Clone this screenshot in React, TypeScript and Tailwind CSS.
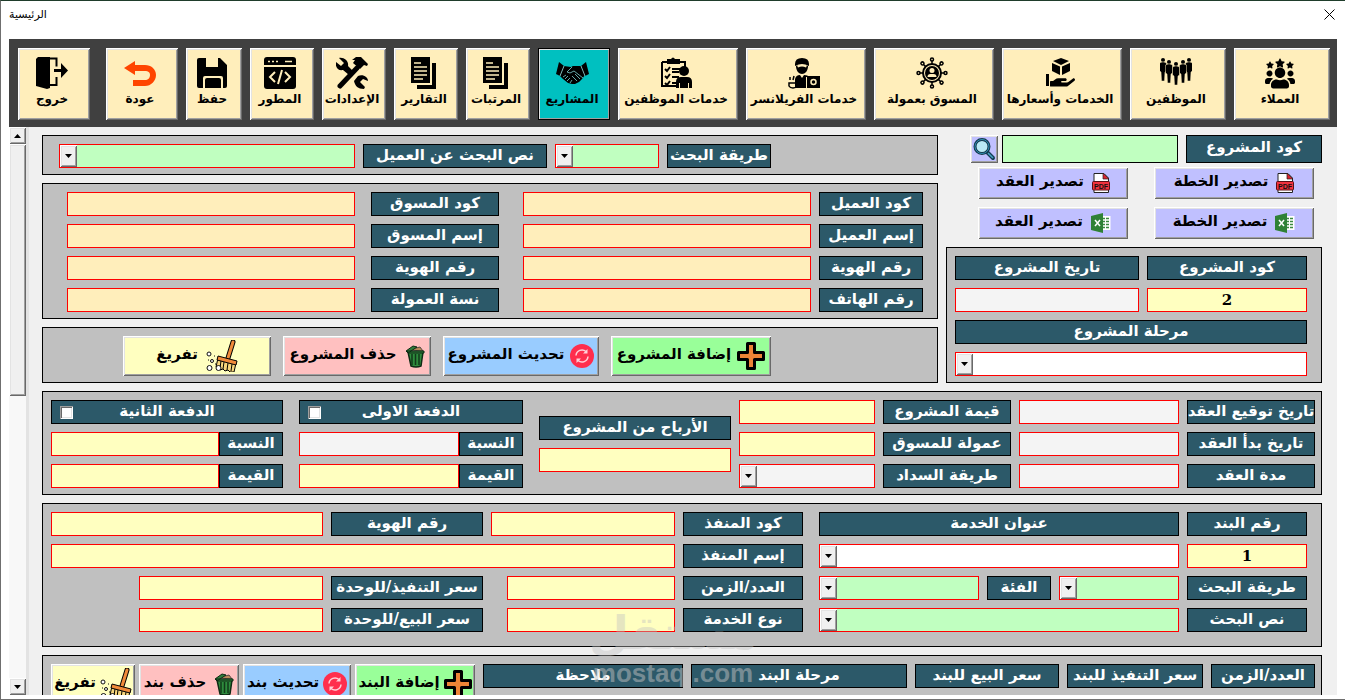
import { useState } from "react";
import type { ReactNode } from "react";
import { FaHandHolding, FaStar, FaUsers } from "react-icons/fa";

const bevel =
  "shadow-[inset_1px_1px_0_#fff,inset_-1px_-1px_0_#696969,inset_2px_2px_0_#e3e3e3,inset_-2px_-2px_0_#a0a0a0]";

/* ---------- toolbar icons ---------- */

const ExitIcon = () => (
  <svg viewBox="0 0 32 32" className="size-8">
    <path d="M0 2 2 0h12v31l-3 1-11-3z" fill="#000" />
    <path d="M14 1.5h6.500v8M14 28h6.500v-8" fill="none" stroke="#000" strokeWidth="2" />
    <path d="M18 12h7V6l7 7.500-7 7.500v-6h-7z" fill="#000" />
  </svg>
);

const BackIcon = () => (
  <svg viewBox="0 0 32 32" className="size-8">
    <path d="M0 11 11 4v4h10c6 0 11 4 11 10s-5 11-11 11H9v-6h12c3 0 5-2 5-5s-2-4-5-4H11v4z" fill="#ff4500" />
  </svg>
);

const SaveIcon = () => (
  <svg viewBox="0 0 32 32" className="size-8">
    <path d="M1 3q0-2 2-2h7v9h12V1h2l7 7v21q0 2-2 2h-2V21q0-2-2-2H9q-2 0-2 2v10H3q-2 0-2-2zM12 1h3v6h5V1h-8zM9 31v-8q0-2 2-2h12q2 0 2 2v8z" fill="#000" />
    <path d="M15 1h5v7h-5z" fill="#ffeebb" />
  </svg>
);

const CodeIcon = () => (
  <svg viewBox="0 0 32 32" className="size-8">
    <rect width="32" height="32" rx="3" fill="#000" />
    <path d="M0 9h32" stroke="#ffeebb" strokeWidth="2" />
    <path d="M4 4.500h2M8 4.500h2M12 4.500h2M21 4.500h7" stroke="#ffeebb" strokeWidth="1.500" />
    <path d="m11 15-5 5 5 5M21 15l5 5-5 5M18 13l-4 14" fill="none" stroke="#ffeebb" strokeWidth="2" />
  </svg>
);

const ToolsIcon = () => (
  <svg viewBox="0 0 32 32" className="size-8">
    <path d="M4 29 21 11" stroke="#000" strokeWidth="5" strokeLinecap="round" />
    <path d="m16 3 4-3h5l7 7-1 2-3-1-4 4-7-6 2-3z" fill="#000" />
    <path d="m3 1 5 5-3 3-5-4c-1 5 2 9 7 8l6 5 4-4-5-5c1-5-4-9-9-8zM18 24l4-5c5-2 10 1 10 5l-5-2-3 3 5 5-1 2c-6 0-9-3-10-8z" fill="#000" />
  </svg>
);

const DocumentsIcon = () => (
  <svg viewBox="0 0 26 32" className="h-8 w-[26px]">
    <path d="M0 0h19v26H0z" fill="#000" />
    <path d="M21 6h4v26H6v-4h15z" fill="#000" />
    <path d="M3 6h7M3 10h13M3 14h13M3 18h13M3 22h9" stroke="#ffeebb" strokeWidth="1.500" />
  </svg>
);

const HandshakeIcon = () => (
  <svg viewBox="0 0 33 32" className="h-8 w-[33px]">
    <path d="m3 5 5 4-4 10-4-2zM30 5l-5 4 4 10 4-2z" fill="#000" />
    <path d="m8 9 7 1 2-1 8 0 4 9-3 4-3 3-4 2-3 0-4-1-5-4-3-3z" fill="#000" />
    <path d="m8 9-4 10M25 9l4 10" stroke="#9fdede" strokeWidth=".8" />
    <path d="m16 10-5 5 3 1 4-2 9 7M19 17l5 5M16 19l5 5M7 20l3-2M9 22l3-3M11 24l3-3M14 26l2-3" fill="none" stroke="#7fd0d0" strokeWidth=".8" />
  </svg>
);

const ChecklistIcon = () => (
  <svg viewBox="0 0 32 32" className="size-8">
    <path d="M2 5h23v7M16 29H2V5" fill="none" stroke="#000" strokeWidth="2" />
    <path d="M7 2h4q2-3 4 0h5v5H7z" fill="#000" />
    <path d="m5 12 2 2 3-4M5 19l2 2 3-4M5 26l2 2 3-4M12 12h8M12 15h7M12 20h7M12 26h4" fill="none" stroke="#000" strokeWidth="2" />
    <circle cx="24" cy="14" r="5" fill="#000" />
    <path d="M16 31v-6q0-5 5-5h6q5 0 5 5v6z" fill="#000" />
    <path d="M19.500 26v5M28.500 26v5" stroke="#ffeebb" />
  </svg>
);

const FreelancerIcon = () => (
  <svg viewBox="0 0 32 32" className="size-8">
    <path d="M7 7q0-6 7-6t7 6v2q-7-4-14 0z" fill="#000" />
    <path d="M8 9q6-4 12 0c0 5-3 8-6 8s-6-3-6-8z" fill="#000" />
    <path d="M9 8.500q5-3 10 0l-1 2q-4-2-8 0z" fill="#ffeebb" />
    <path d="M7 31V22q1-4 5-4l2 3 2-3q4 0 5 2h-3v11z" fill="#000" />
    <path d="M19 19h13v12H19z" fill="#000" />
    <circle cx="25.500" cy="25" r="2.500" fill="none" stroke="#ffeebb" strokeWidth="1.500" />
    <path d="M1 26h8v3q-1 2-4 2t-4-2zM2 23v-3M5 23l1-4" fill="none" stroke="#000" strokeWidth="1.500" />
  </svg>
);

const spokes = [0, 45, 90, 135, 180, 225, 270, 315];

const NetworkIcon = () => (
  <svg viewBox="0 0 32 32" className="size-8">
    {spokes.map((angle) => (
      <g key={angle} transform={`rotate(${angle} 16 16)`} fill="none" stroke="#000">
        <path d="M16 7V4" strokeWidth="1.500" />
        <circle cx="16" cy="2.500" r="1.500" strokeWidth="1.500" />
      </g>
    ))}
    <circle cx="16" cy="16" r="9" fill="none" stroke="#000" strokeWidth="2" />
    <circle cx="16" cy="16" r="7" fill="#000" />
    <circle cx="16" cy="13.500" r="2.500" fill="#ffeebb" />
    <path d="M11.500 20q0-3 3-3h3q3 0 3 3z" fill="#ffeebb" />
  </svg>
);

const ServicesIcon = () => (
  <svg viewBox="0 0 32 32" className="size-8">
    <path d="m17 1 8 3-8 4-8-4zM8 6l8 3.500V18l-8-4zM26 6l-8 3.500V18l8-4z" fill="#000" />
    <path d="M2 17h3v12H2z" fill="#000" />
    <FaHandHolding x="6" y="6" size={25} />
  </svg>
);

const crew = [
  { x: 3, y: 1 },
  { x: 29, y: 1 },
  { x: 9, y: 3 },
  { x: 23, y: 3 },
  { x: 16, y: 5 },
];

const StaffIcon = () => (
  <svg viewBox="0 0 32 32" className="size-8">
    {crew.map(({ x, y }) => (
      <g key={x} transform={`translate(${x} ${y})`}>
        <circle cy="2" r="2" fill="#000" />
        <path d="m-3.500 5 2.500-1h2l2.500 1v8l-1.500 1-.5 9h-3l-.5-9-1.500-1z" fill="#000" stroke="#ffeebb" strokeWidth=".5" />
      </g>
    ))}
  </svg>
);

const CustomersIcon = () => (
  <svg viewBox="0 0 32 32" className="size-8">
    <FaStar x="11" y="1" size={10} />
    <FaStar x="2" y="4" size={8} />
    <FaStar x="22" y="4" size={8} />
    <FaUsers x="1" y="6" size={30} />
  </svg>
);

/* ---------- form icons ---------- */

const SearchIcon = () => (
  <svg viewBox="0 0 24 24" className="size-6">
    <path d="m15 15 6 6" stroke="#123c55" strokeWidth="4" strokeLinecap="round" />
    <path d="m16 16 5 5" stroke="#4aa3c7" strokeWidth="1.500" />
    <circle cx="10" cy="9.500" r="7" fill="#b9e9f5" stroke="#14384c" strokeWidth="3" />
    <circle cx="10" cy="9.500" r="7" fill="none" stroke="#2f8fb5" strokeWidth="1" />
  </svg>
);

const PdfIcon = () => (
  <svg viewBox="0 0 18 20" className="h-5 w-[18px]">
    <path d="M2 .500h10l4.500 4.500v14.500H2z" fill="#fff" stroke="#222" />
    <path d="M11 0v6h6z" fill="#d9222f" stroke="#222" strokeWidth=".7" />
    <rect x=".5" y="8.500" width="17" height="8.500" rx="1" fill="#f1323e" stroke="#5a1116" />
    <text x="9" y="15.500" textAnchor="middle" fontSize="7" fontWeight="700" fill="#111" fontFamily="Liberation Sans, sans-serif">
      PDF
    </text>
  </svg>
);

const ExcelIcon = () => (
  <svg viewBox="0 0 20 20" className="size-5">
    <path d="M10 3h9.500v14H10z" fill="#fff" />
    <path d="M12 5.500h2M15 5.500h3M12 8.500h2M15 8.500h3M12 11.500h2M15 11.500h3M12 14.500h2M15 14.500h3" stroke="#3b8a3f" strokeWidth="1.500" />
    <path d="m0 3 12-3v20L0 17z" fill="#2f8136" />
    <path d="m4 7 5 6M9 7l-5 6" stroke="#fff" strokeWidth="1.500" />
  </svg>
);

const PlusIcon = () => (
  <svg viewBox="0 0 28 28" className="size-7 shrink-0">
    <path d="M10.500 1.500h7v9h9v7h-9v9h-7v-9h-9v-7h9z" fill="#ed8536" stroke="#000" strokeWidth="3" strokeLinejoin="round" />
  </svg>
);

const RefreshIcon = () => (
  <svg viewBox="0 0 24 24" className="size-6 shrink-0">
    <circle cx="12" cy="12" r="12" fill="#ff2e4d" />
    <path d="M6 11.500a6 6 0 0 1 10-4M18 12.500a6 6 0 0 1-10 4" fill="none" stroke="#ffd0d8" strokeWidth="1.500" />
    <path d="M17.500 5v4.500H13zM6.500 19v-4.500H11z" fill="#ffd0d8" />
  </svg>
);

const TrashIcon = () => (
  <svg viewBox="0 0 20 24" className="h-6 w-5 shrink-0">
    <path d="M3 8h15l-2 14q-5 2-10 0z" fill="#2e8b3d" stroke="#0e2a14" strokeWidth="1.500" />
    <path d="M7 10v11M10.500 10v11M14 10v11" stroke="#123a1a" strokeWidth="1.500" />
    <path d="M5 6q3-4 6-2l4-1 3 4z" fill="#b98a5a" stroke="#333" strokeWidth=".8" />
    <path d="m1 7 7-5 4 1-9 6zM2 7h17v2H3z" fill="#2f7d3b" stroke="#0e2a14" />
  </svg>
);

const BroomIcon = () => (
  <svg viewBox="0 0 32 32" className="size-8 shrink-0">
    <path d="M27 2 22 18" stroke="#000" strokeWidth="5" strokeLinecap="round" />
    <path d="M27 2 22 18" stroke="#f08a3a" strokeWidth="3" strokeLinecap="round" />
    <path d="m12 18-2 9 3 1 1 2 3-1 2 2 3-1 2 2h4l2-9z" fill="#f7d67c" stroke="#000" />
    <path d="m15 21-1 7M18 22l-1 7M22 23l-1 7M26 24l-1 7" stroke="#000" />
    <path d="m12 16 19 5-1 4-19-5z" fill="#f08a3a" stroke="#000" />
    <g fill="#fff" stroke="#111">
      <circle cx="3" cy="14" r="2" />
      <circle cx="6" cy="21" r="1.500" />
      <circle cx="3.500" cy="28" r="2.500" />
      <circle cx="12.500" cy="28" r="2.500" />
    </g>
    <path d="M8 16h1M2 20h1M9 24h1" stroke="#111" />
  </svg>
);

/* ---------- controls ---------- */

const fills = {
  yellow: "bg-[#ffffc0]",
  green: "bg-[#c0ffc0]",
  sand: "bg-[#ffeebb]",
  gray: "bg-[#f4f4f4]",
  white: "bg-white",
};

type Fill = keyof typeof fills;

const Label = ({ htmlFor, className = "", children }: { htmlFor?: string; className?: string; children: ReactNode }) => (
  <label
    htmlFor={htmlFor}
    className={`flex h-6 items-center justify-center border border-black bg-[#2c5969] pb-0.5 text-[15px] font-bold whitespace-nowrap text-white ${className}`}
  >
    {children}
  </label>
);

const Field = ({ id, fill = "yellow", className = "", value }: { id: string; fill?: Fill; className?: string; value?: string }) => (
  <input
    id={id}
    type="text"
    defaultValue={value}
    className={`h-6 min-w-0 border border-[#ff0000] px-1 text-center font-['DejaVu_Serif',serif] text-[15px] font-bold text-black outline-none ${fills[fill]} ${className}`}
  />
);

const Combo = ({ id, fill = "green", className = "" }: { id: string; fill?: Fill; className?: string }) => (
  <div className={`relative h-6 min-w-0 border border-[#ff0000] ${fills[fill]} ${className}`}>
    <select id={id} className="size-full appearance-none bg-transparent pr-1 pl-5 text-sm outline-none">
      <option value=""></option>
    </select>
    <span className={`pointer-events-none absolute inset-y-0 left-0 flex w-[17px] items-center justify-center bg-[#f0f0f0] ${bevel}`}>
      <svg viewBox="0 0 7 4" className="h-1 w-[7px]">
        <path d="M0 0h7L3.500 4z" />
      </svg>
    </span>
  </div>
);

const Panel = ({ className = "", children }: { className?: string; children: ReactNode }) => (
  <section className={`border border-black bg-[#c0c0c0] pt-2 ${className}`}>{children}</section>
);

const Action = ({ className, icon, children }: { className: string; icon: ReactNode; children: ReactNode }) => (
  <button type="button" className={`flex items-center justify-center font-bold whitespace-nowrap text-black ${bevel} ${className}`}>
    {icon}
    <span className="pb-1">{children}</span>
  </button>
);

/* ---------- toolbar ---------- */

const tabs = [
  { title: "العملاء", icon: <CustomersIcon />, width: "flex-[96_1_0px]" },
  { title: "الموظفين", icon: <StaffIcon />, width: "flex-[96_1_0px]" },
  { title: "الخدمات وأسعارها", icon: <ServicesIcon />, width: "flex-[120_1_0px]" },
  { title: "المسوق بعمولة", icon: <NetworkIcon />, width: "flex-[120_1_0px]" },
  { title: "خدمات الفريلانسر", icon: <FreelancerIcon />, width: "flex-[120_1_0px]" },
  { title: "خدمات الموظفين", icon: <ChecklistIcon />, width: "flex-[120_1_0px]" },
  { title: "المشاريع", icon: <HandshakeIcon />, width: "flex-[72_1_0px]" },
  { title: "المرتبات", icon: <DocumentsIcon />, width: "flex-[64_1_0px]" },
  { title: "التقارير", icon: <DocumentsIcon />, width: "flex-[64_1_0px]" },
  { title: "الإعدادات", icon: <ToolsIcon />, width: "flex-[64_1_0px]" },
  { title: "المطور", icon: <CodeIcon />, width: "flex-[64_1_0px]" },
  { title: "حفظ", icon: <SaveIcon />, width: "flex-[56_1_0px]" },
  { title: "عودة", icon: <BackIcon />, width: "flex-[72_1_0px]" },
  { title: "خروج", icon: <ExitIcon />, width: "flex-[72_1_0px] mr-2" },
];

const Toolbar = () => {
  const [active, setActive] = useState("المشاريع");

  return (
    <nav className="flex h-[88px] shrink-0 gap-2 bg-[#404040] pt-[9px] pr-[7px] pl-[9px]">
      {tabs.map(({ title, icon, width }) => (
        <button
          key={title}
          type="button"
          onClick={() => setActive(title)}
          className={`h-[72px] min-w-0 ${width} ${active === title ? "bg-[#00c0c0] outline outline-black -outline-offset-1" : "bg-[#ffeebb]"}`}
        >
          <span className={`flex h-full flex-col items-center justify-center gap-0.5 pr-1 pb-1 text-[12px] leading-4 font-bold whitespace-nowrap ${bevel}`}>
            {icon}
            {title}
          </span>
        </button>
      ))}
    </nav>
  );
};

/* ---------- form sections ---------- */

const ProjectLookup = () => (
  <div className="flex w-[376px] shrink-0 flex-col">
    <div className="flex pl-6">
      <label htmlFor="find-project" className="flex h-7 w-[136px] items-center justify-center border border-black bg-[#2c5969] pb-1 text-[15px] font-bold text-white">
        كود المشروع
      </label>
      <input id="find-project" type="text" className="mr-2 h-7 min-w-0 flex-1 border border-black bg-[#c0ffc0] px-1 text-sm outline-none" />
      <button type="button" aria-label="بحث" className={`mr-1 flex size-7 items-center justify-center bg-[#c0c0ff] ${bevel}`}>
        <SearchIcon />
      </button>
    </div>
    <div className="mt-1 mb-2 grid grid-cols-[160px_150px] gap-x-[26px] gap-y-2 pr-2">
      <Action icon={<PdfIcon />} className="h-8 gap-2 bg-[#c0c0ff] text-[15px]">تصدير الخطة</Action>
      <Action icon={<PdfIcon />} className="h-8 gap-2 bg-[#c0c0ff] text-[15px]">تصدير العقد</Action>
      <Action icon={<ExcelIcon />} className="h-8 gap-2 bg-[#c0c0ff] text-[15px]">تصدير الخطة</Action>
      <Action icon={<ExcelIcon />} className="h-8 gap-2 bg-[#c0c0ff] text-[15px]">تصدير العقد</Action>
    </div>
    <Panel className="grid grid-cols-[160px_1fr] gap-2 pr-3.5 pb-1.5 pl-2">
      <Label htmlFor="project-code">كود المشروع</Label>
      <Label htmlFor="project-date">تاريخ المشروع</Label>
      <Field id="project-code" value="2" />
      <Field id="project-date" fill="gray" />
      <Label htmlFor="project-stage" className="col-span-2">مرحلة المشروع</Label>
      <Combo id="project-stage" fill="white" className="col-span-2" />
    </Panel>
  </div>
);

const people = [
  ["كود العميل", "كود المسوق"],
  ["إسم العميل", "إسم المسوق"],
  ["رقم الهوية", "رقم الهوية"],
  ["رقم الهاتف", "نسة العمولة"],
];

const ClientSection = () => (
  <div className="flex min-w-0 flex-1 flex-col gap-2">
    <Panel className="flex gap-2 pr-[166px] pb-1.5 pl-4">
      <Label htmlFor="client-method" className="w-[104px]">طريقة البحث</Label>
      <Combo id="client-method" className="w-[104px]" />
      <Label htmlFor="client-query" className="w-[184px]">نص البحث عن العميل</Label>
      <Combo id="client-query" className="flex-1" />
    </Panel>
    <Panel className="flex flex-col gap-2 pr-3.5 pb-1.5 pl-6">
      {people.map(([client, marketer], i) => (
        <div key={client} className="flex">
          <Label htmlFor={`client-${i}`} className="w-[104px]">{client}</Label>
          <Field id={`client-${i}`} fill="sand" className="mr-2 flex-1" />
          <Label htmlFor={`marketer-${i}`} className="mr-6 w-32">{marketer}</Label>
          <Field id={`marketer-${i}`} fill="sand" className="mr-4 flex-1" />
        </div>
      ))}
    </Panel>
    <Panel className="flex gap-3 pr-[166px] pb-1.5">
      <Action icon={<PlusIcon />} className="h-10 w-40 gap-1.5 bg-[#99ff99] text-[15px]">إضافة المشروع</Action>
      <Action icon={<RefreshIcon />} className="h-10 w-[156px] gap-1.5 bg-[#99ccff] text-[15px]">تحديث المشروع</Action>
      <Action icon={<TrashIcon />} className="h-10 w-[148px] gap-2 bg-[#ffc0c0] text-[15px]">حذف المشروع</Action>
      <Action icon={<BroomIcon />} className="h-10 w-[148px] gap-2 bg-[#ffffc0] text-[15px]">تفريغ</Action>
    </Panel>
  </div>
);

const Payment = ({ id, title, rateFill, className }: { id: string; title: string; rateFill: Fill; className: string }) => (
  <fieldset className={`flex min-w-0 shrink-0 flex-col gap-2 ${className}`}>
    <div className="grid items-center">
      <Label htmlFor={`${id}-on`} className="col-start-1 row-start-1">{title}</Label>
      <input
        id={`${id}-on`}
        type="checkbox"
        className="col-start-1 row-start-1 ml-[9px] size-[13px] appearance-none justify-self-end bg-white shadow-[inset_1px_1px_0_#a0a0a0,inset_-1px_-1px_0_#fff,inset_2px_2px_0_#696969,inset_-2px_-2px_0_#e3e3e3] checked:bg-black"
      />
    </div>
    <div className="flex">
      <Label htmlFor={`${id}-rate`} className="w-16">النسبة</Label>
      <Field id={`${id}-rate`} fill={rateFill} className="flex-1" />
    </div>
    <div className="flex">
      <Label htmlFor={`${id}-amount`} className="w-16">القيمة</Label>
      <Field id={`${id}-amount`} className="flex-1" />
    </div>
  </fieldset>
);

const ContractSection = () => (
  <Panel className="flex pr-1.5 pb-1.5 pl-2">
    <div className="grid min-w-0 flex-1 grid-cols-[128px_160fr_128px_136fr] gap-2">
      <Label htmlFor="sign-date">تاريخ توقيع العقد</Label>
      <Field id="sign-date" fill="gray" />
      <Label htmlFor="project-value">قيمة المشروع</Label>
      <Field id="project-value" />
      <Label htmlFor="start-date">تاريخ بدأ العقد</Label>
      <Field id="start-date" fill="gray" />
      <Label htmlFor="commission">عمولة للمسوق</Label>
      <Field id="commission" />
      <Label htmlFor="duration">مدة العقد</Label>
      <Field id="duration" fill="gray" />
      <Label htmlFor="pay-method">طريقة السداد</Label>
      <Combo id="pay-method" fill="gray" />
    </div>
    <div className="mr-2 flex w-48 flex-col justify-center gap-2">
      <Label htmlFor="profit">الأرباح من المشروع</Label>
      <Field id="profit" />
    </div>
    <Payment id="first" title="الدفعة الاولى" rateFill="gray" className="mr-4 w-56" />
    <Payment id="second" title="الدفعة الثانية" rateFill="yellow" className="mr-4 w-[232px]" />
  </Panel>
);

const ItemSection = () => (
  <Panel className="flex gap-4 pr-3.5 pb-3.5 pl-2">
    <div className="grid w-[488px] shrink-0 grid-cols-[120px_120px_64px_1fr] gap-2">
      <Label htmlFor="item-no">رقم البند</Label>
      <Label htmlFor="service" className="col-span-3">عنوان الخدمة</Label>
      <Field id="item-no" value="1" />
      <Combo id="service" fill="white" className="col-span-3" />
      <Label htmlFor="item-method">طريقة البحث</Label>
      <Combo id="item-method" />
      <Label htmlFor="category">الفئة</Label>
      <Combo id="category" />
      <Label htmlFor="item-query">نص البحث</Label>
      <Combo id="item-query" className="col-span-3" />
    </div>
    <div className="flex min-w-0 flex-1 flex-col gap-2">
      <div className="flex gap-2">
        <Label htmlFor="worker-code" className="w-[120px]">كود المنفذ</Label>
        <Field id="worker-code" className="w-[184px]" />
        <Label htmlFor="worker-id" className="w-[152px]">رقم الهوية</Label>
        <Field id="worker-id" className="flex-1" />
      </div>
      <div className="flex gap-2">
        <Label htmlFor="worker-name" className="w-[120px]">إسم المنفذ</Label>
        <Field id="worker-name" className="flex-1" />
      </div>
      <div className="flex gap-2 pl-[88px]">
        <Label htmlFor="quantity" className="w-[120px]">العدد/الزمن</Label>
        <Field id="quantity" className="w-[168px]" />
        <Label htmlFor="cost-price" className="mr-4 w-[152px]">سعر التنفيذ/للوحدة</Label>
        <Field id="cost-price" className="flex-1" />
      </div>
      <div className="flex gap-2 pl-[88px]">
        <Label htmlFor="service-type" className="w-[120px]">نوع الخدمة</Label>
        <Field id="service-type" className="w-[168px]" />
        <Label htmlFor="sale-price" className="mr-4 w-[152px]">سعر البيع/للوحدة</Label>
        <Field id="sale-price" className="flex-1" />
      </div>
    </div>
  </Panel>
);

const ItemsTable = () => (
  <Panel className="flex gap-2 pr-1.5 pb-1.5 pl-2">
    <Label className="w-[104px]">العدد/الزمن</Label>
    <Label className="w-[136px]">سعر التنفيذ للبند</Label>
    <Label className="w-36">سعر البيع للبند</Label>
    <Label className="w-[216px]">مرحلة البند</Label>
    <Label className="flex-1">ملاحظة</Label>
    <div className="flex gap-1">
      <Action icon={<PlusIcon />} className="h-10 w-[120px] gap-1 bg-[#99ff99] text-[15px]">إضافة البند</Action>
      <Action icon={<RefreshIcon />} className="h-10 w-[108px] gap-1 bg-[#99ccff] text-[15px]">تحديث بند</Action>
      <Action icon={<TrashIcon />} className="h-10 w-[100px] gap-2 bg-[#ffc0c0] text-[15px]">حذف بند</Action>
      <Action icon={<BroomIcon />} className="h-10 w-[84px] gap-1 bg-[#ffffc0] text-[15px]">تفريغ</Action>
    </div>
  </Panel>
);

const ScrollBar = () => (
  <div className="flex w-5 shrink-0 flex-col border-r-[3px] border-[#e3e3e3] bg-[#f8f8f8]">
    <button type="button" aria-label="أعلى" className={`flex h-[17px] items-center justify-center bg-[#f0f0f0] ${bevel}`}>
      <svg viewBox="0 0 7 4" className="h-1 w-[7px]">
        <path d="M0 4h7L3.500 0z" />
      </svg>
    </button>
    <div className={`h-[252px] bg-[#f0f0f0] ${bevel}`} />
    <button type="button" aria-label="أسفل" className={`mt-auto flex h-[17px] items-center justify-center bg-[#f0f0f0] ${bevel}`}>
      <svg viewBox="0 0 7 4" className="h-1 w-[7px]">
        <path d="M0 0h7L3.500 4z" />
      </svg>
    </button>
  </div>
);

const Watermark = () => (
  <div dir="ltr" className="pointer-events-none absolute bottom-3 left-1/2 flex w-40 -translate-x-1/2 flex-col items-center text-[#c0c0c0]">
    <span className="text-[46px] leading-[52px] font-bold opacity-40">مستقل</span>
    <span className="font-['Liberation_Sans',sans-serif] text-[26px] leading-7 font-bold opacity-50">mostaql.com</span>
  </div>
);

const App = () => (
  <div
    dir="rtl"
    className="relative flex h-screen flex-col overflow-hidden border-t border-b border-l border-t-[#1f3d2b] border-b-[#6f6f6f] border-l-[#6f6f6f] bg-white pr-2 pb-1 pl-2 font-['DejaVu_Sans',sans-serif]"
  >
    <header className="flex h-[38px] shrink-0 items-start justify-between">
      <button type="button" aria-label="إغلاق" className="p-0.5 pt-2">
        <svg viewBox="0 0 11 11" className="size-[11px]">
          <path d="m.5.5 10 10m0-10-10 10" stroke="#000" />
        </svg>
      </button>
      <h1 className="pt-1.5 text-[11px] leading-4">الرئيسية</h1>
    </header>
    <Toolbar />
    <div className="flex min-h-0 flex-1">
      <main className="flex min-w-0 flex-1 flex-col gap-2 overflow-hidden bg-[#f0f0f0] pt-2 pr-[15px] pl-[13px]">
        <div className="flex gap-2">
          <ProjectLookup />
          <ClientSection />
        </div>
        <ContractSection />
        <ItemSection />
        <ItemsTable />
      </main>
      <ScrollBar />
    </div>
    <Watermark />
  </div>
);

export default App;
